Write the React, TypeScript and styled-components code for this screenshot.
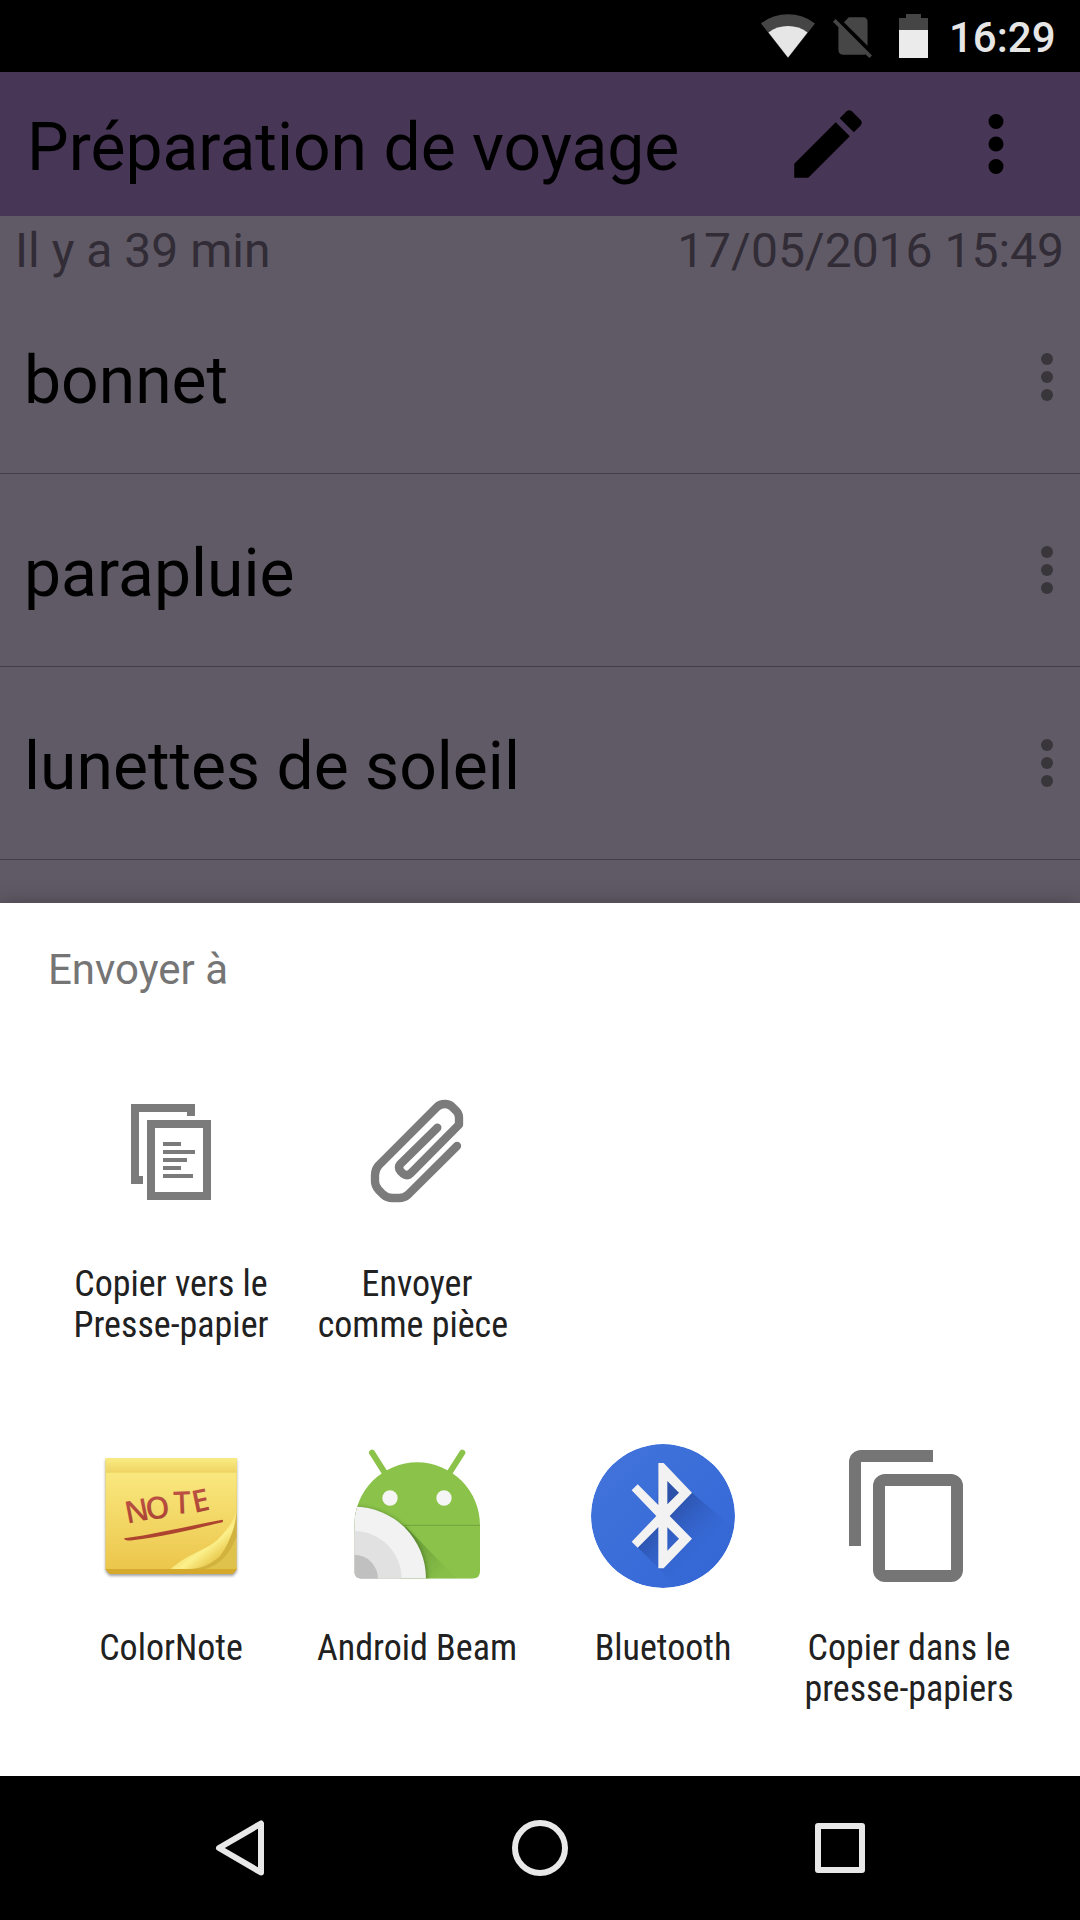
import React from "react";
import styled, { createGlobalStyle } from "styled-components";

const GlobalStyle = createGlobalStyle`
  * { box-sizing: border-box; }
  body { margin: 0; background: #000; font-family: Roboto, "Noto Sans", sans-serif; }
  svg { display: block; flex: none; }
`;

const Screen = styled.div`
  width: 1080px;
  height: 1920px;
  display: flex;
  flex-direction: column;
  overflow: hidden;
  background: #000;
`;

const StatusBar = styled.header`
  height: 72px;
  flex: none;
  display: flex;
  justify-content: flex-end;
  align-items: center;
  padding-right: 25px;
  background: #000;
`;

const StatusIcon = styled.div<{ $gap: number }>`
  margin-right: ${(p) => p.$gap}px;
`;

const Clock = styled.span`
  width: 106px;
  font-size: 42px;
  font-weight: 500;
  line-height: 49px;
  padding-top: 3px;
  text-align: right;
  color: #e6e6e6;
`;

const AppBar = styled.div`
  height: 144px;
  flex: none;
  display: flex;
  align-items: center;
  padding: 0 39px 0 27px;
  background: #483657;
  color: #000;
`;

const AppTitle = styled.h1`
  flex: 1;
  margin: 0;
  padding-top: 7px;
  font-size: 66px;
  font-weight: 400;
  line-height: 78px;
`;

const ActionButton = styled.div<{ $gap?: number }>`
  margin-right: ${(p) => p.$gap ?? 0}px;
`;

const NoteBody = styled.main`
  height: 687px;
  flex: none;
  background: #605a66;
  overflow: hidden;
`;

const Meta = styled.div`
  height: 65px;
  display: flex;
  justify-content: space-between;
  padding: 6px 16px 0 15px;
  font-size: 48px;
  line-height: 57px;
  color: #312c36;
`;

const ItemRow = styled.div`
  height: 193px;
  display: flex;
  align-items: center;
  justify-content: space-between;
  padding: 0 27px 0 24px;
  border-bottom: 1px solid #443e4b;
`;

const ItemText = styled.span`
  padding-top: 8px;
  font-size: 66px;
  line-height: 78px;
  color: #000;
`;

const Sheet = styled.section`
  flex: none;
  height: 873px;
  padding: 42px 48px 0;
  background: #fff;
  box-shadow: 0 0 20px rgba(0, 0, 0, 0.28);
`;

const SheetTitle = styled.h2`
  margin: 0 0 86px;
  font-size: 42px;
  font-weight: 400;
  line-height: 49px;
  color: #757575;
`;

const Targets = styled.div`
  display: grid;
  grid-template-columns: repeat(4, 246px);
  grid-auto-rows: 364px;
`;

const Target = styled.div<{ $column?: number }>`
  grid-column-start: ${(p) => p.$column ?? "auto"};
  display: flex;
  flex-direction: column;
  align-items: center;
`;

const TargetLabel = styled.span`
  margin-top: 40px;
  font-family: "Roboto Condensed", Roboto, sans-serif;
  font-stretch: condensed;
  font-size: 36px;
  line-height: 41px;
  text-align: center;
  white-space: pre-line;
  color: #212121;
`;

const NavBar = styled.nav`
  height: 144px;
  flex: none;
  display: flex;
  align-items: center;
  justify-content: center;
  gap: 240px;
  background: #000;
  position: relative;
`;

const WifiIcon = () => (
  <svg width="54" height="44" viewBox="0 0 54 44">
    <path d="M0 9.5A44 44 0 0 1 54 9.5L27 44Z" fill="#454545" />
    <path d="M7.5 18.5A33 33 0 0 1 46.5 18.5L27 43.5Z" fill="#e6e6e6" />
  </svg>
);

const NoSimIcon = () => (
  <svg width="50" height="50" viewBox="0 0 24 24">
    <path
      fill="#464646"
      d="M18.99 5c0-1.1-.89-2-1.99-2h-7L7.66 5.34 19 16.68 18.99 5zM3.65 3.88L2.38 5.15 5 7.77V19c0 1.1.9 2 2 2h10.01c.35 0 .67-.1.96-.26l1.88 1.88 1.27-1.27L3.65 3.88z"
    />
  </svg>
);

const BatteryIcon = () => (
  <svg width="29" height="44" viewBox="0 0 29 44">
    <path d="M0 4H7V0H22V4H29V16H0Z" fill="#454545" />
    <path d="M0 16H29V44H0Z" fill="#ebebeb" />
  </svg>
);

const EditIcon = () => (
  <svg width="90" height="90" viewBox="0 0 24 24">
    <path d="M3 17.25V21h3.75L17.81 9.94l-3.75-3.75L3 17.25zM20.71 7.04c.39-.39.39-1.02 0-1.41l-2.34-2.34c-.39-.39-1.02-.39-1.41 0l-1.83 1.83 3.75 3.75 1.83-1.83z" />
  </svg>
);

const MoreIcon = () => (
  <svg width="90" height="90" viewBox="0 0 24 24">
    <circle cx="12" cy="6" r="2" />
    <circle cx="12" cy="12" r="2" />
    <circle cx="12" cy="18" r="2" />
  </svg>
);

const RowMenuIcon = () => (
  <svg width="12" height="48" viewBox="0 0 12 48" fill="#39363b">
    <circle cx="6" cy="6" r="6" />
    <circle cx="6" cy="24" r="6" />
    <circle cx="6" cy="42" r="6" />
  </svg>
);

const CopyPagesIcon = () => (
  <svg width="144" height="144" viewBox="99 1080 144 144" fill="#7b7b7b">
    <path d="M131 1104H195V1116H187V1112H139V1176H143V1184H131Z" />
    <path fillRule="evenodd" d="M147 1120H211V1200H147ZM155 1128V1192H203V1128Z" />
    <path d="M163 1142h18v4h-18zM163 1150h32v4h-32zM163 1158h24v4h-24zM163 1166h18v4h-18zM163 1174h30v4h-30z" />
  </svg>
);

const PaperclipIcon = () => (
  <svg width="144" height="144" viewBox="0 0 432 432" fill="none" stroke="#7b7b7b" strokeWidth="25" strokeLinecap="round" strokeLinejoin="round">
    <path d="M336 198L190 343Q178 354 162 354H142Q126 354 114 343L101 330Q90 318 90 304V285Q90 268 101 256L276 81Q285 72 300 72Q313 72 322 81L334 93Q342 101 342 113V134L200 277Q187 291 174 281L167 274Q157 262 167 251L277 143" />
  </svg>
);

const ColorNoteIcon = () => (
  <svg width="144" height="144" viewBox="57 42 432 432">
    <defs>
      <linearGradient id="paper" x1="0" y1="0" x2="0" y2="1">
        <stop offset="0" stopColor="#fbed86" />
        <stop offset="1" stopColor="#ecc64c" />
      </linearGradient>
      <linearGradient id="band" x1="0" y1="0" x2="0" y2="1">
        <stop offset="0" stopColor="#f9ec83" />
        <stop offset="1" stopColor="#efd364" />
      </linearGradient>
      <linearGradient id="curl" x1="0.25" y1="0.45" x2="0.7" y2="0.95">
        <stop offset="0" stopColor="#efcf55" />
        <stop offset="0.5" stopColor="#fcf08b" />
        <stop offset="1" stopColor="#e3bd3b" />
      </linearGradient>
      <linearGradient id="ink" x1="0" y1="0" x2="0" y2="1">
        <stop offset="0" stopColor="#c4574b" />
        <stop offset="1" stopColor="#a5402f" />
      </linearGradient>
      <filter id="noteShadow" x="-10%" y="-10%" width="120%" height="130%">
        <feGaussianBlur stdDeviation="4" />
      </filter>
    </defs>
    <path d="M77 90H470V424L460 437H88L77 424Z" fill="#000" opacity=".4" filter="url(#noteShadow)" />
    <path d="M77 410H470V419L458 432H89L77 419Z" fill="#d5a92b" />
    <path d="M77 85H470V417H77Z" fill="#dfc24c" />
    <path d="M77 85H470V245C455 300 447 350 420 377C395 397 370 415 320 417H77Z" fill="url(#paper)" />
    <path d="M77 85H470V128H77Z" fill="url(#band)" />
    <path d="M470 245C465 300 443 345 420 377C390 404 360 416 325 417H272C325 370 380 360 412 330C440 302 457 278 470 245Z" fill="url(#curl)" />
    <path d="M470 250C465 302 443 347 421 378C393 404 366 415 335 417H376C420 405 450 370 470 320Z" fill="#bd9c2e" opacity=".4" />
    <text
      x="0 61 143 204"
      y="0 -2 -10 -4"
      rotate="-3 0 6 -4"
      transform="translate(141 281) rotate(-8)"
      fontFamily="'Open Sans', sans-serif"
      fontWeight="600"
      fontSize="92"
      fill="url(#ink)"
    >
      NOTE
    </text>
    <path d="M133 325C230 312 330 287 427 269C430 270 430 275 427 277C330 300 240 322 158 331C145 333 130 331 133 325Z" fill="#ad442f" />
  </svg>
);

const BeamIcon = () => (
  <svg width="144" height="144" viewBox="45 42 432 432">
    <defs>
      <clipPath id="robot">
        <path d="M73 286A188.500 189 0 0 1 450 286V424Q450 446 428 446H95Q73 446 73 424Z" />
      </clipPath>
      <linearGradient id="beamShade" gradientUnits="userSpaceOnUse" x1="240" y1="330" x2="340" y2="430">
        <stop offset="0" stopColor="#2e5a1c" stopOpacity=".35" />
        <stop offset="1" stopColor="#2e5a1c" stopOpacity=".04" />
      </linearGradient>
      <filter id="discShadow" x="-20%" y="-20%" width="140%" height="140%">
        <feGaussianBlur stdDeviation="6" />
      </filter>
    </defs>
    <path d="M126 68L166 131M397 68L357 131" stroke="#8bc34a" strokeWidth="18" strokeLinecap="round" />
    <g clipPath="url(#robot)">
      <rect x="73" y="90" width="378" height="357" fill="#8bc34a" />
      <path d="M73 286H450" stroke="#6b9c38" strokeWidth="2.500" />
      <path d="M225 287L380 446H250Z" fill="url(#beamShade)" />
      <circle cx="74" cy="449" r="217" fill="#254716" opacity=".5" filter="url(#discShadow)" />
      <circle cx="72" cy="446" r="216" fill="#f2f2f2" />
      <circle cx="72" cy="446" r="143" fill="#e1e1e1" />
      <circle cx="72" cy="446" r="72" fill="#c0c0c0" />
      <circle cx="180" cy="204" r="23" fill="#f5f5f5" />
      <circle cx="342" cy="204" r="23" fill="#f5f5f5" />
    </g>
  </svg>
);

const BluetoothIcon = () => (
  <svg width="144" height="144" viewBox="63 42 432 432">
    <defs>
      <clipPath id="btDisc">
        <circle cx="279" cy="258" r="216" />
      </clipPath>
      <linearGradient id="btShade" gradientUnits="userSpaceOnUse" x1="270" y1="250" x2="385" y2="365">
        <stop offset="0" stopColor="#1c3478" stopOpacity=".5" />
        <stop offset="1" stopColor="#2750b8" stopOpacity=".05" />
      </linearGradient>
      <linearGradient id="btFace" x1="0" y1="0" x2="1" y2="1">
        <stop offset="0" stopColor="#4374db" />
        <stop offset="1" stopColor="#3367d6" />
      </linearGradient>
    </defs>
    <g clipPath="url(#btDisc)">
      <circle cx="279" cy="258" r="216" fill="url(#btFace)" />
      <path d="M281 100L366 188L520 320V480H330L203 352L186 335L262 258L265 100Z" fill="url(#btShade)" />
    </g>
    <path
      fill="#f2f2f2"
      fillRule="evenodd"
      d="M265 99H281L366 188L299 258L366 326L281 415H265V291L203 353L185 335L259 258L185 181L203 163L265 225ZM292 153V223L327 188ZM292 292V362L327 326Z"
    />
  </svg>
);

const CopyIcon = () => (
  <svg width="144" height="144" viewBox="51 42 432 432" fill="#757575">
    <path d="M339 60H123A36 36 0 0 0 87 96V348H123V96H339Z" />
    <path
      fillRule="evenodd"
      d="M195 132H393A36 36 0 0 1 429 168V420A36 36 0 0 1 393 456H195A36 36 0 0 1 159 420V168A36 36 0 0 1 195 132ZM195 168V420H393V168Z"
    />
  </svg>
);

const NavIcons = () => (
  <>
    <svg width="60" height="60" viewBox="0 0 60 60" fill="none" stroke="#e8e8e8" strokeWidth="6" strokeLinejoin="round">
      <path d="M51 5.500V54.500L9 30Z" />
    </svg>
    <svg width="60" height="60" viewBox="0 0 60 60" fill="none" stroke="#e8e8e8" strokeWidth="6">
      <circle cx="30" cy="30" r="25" />
    </svg>
    <svg width="60" height="60" viewBox="0 0 60 60" fill="none" stroke="#e8e8e8" strokeWidth="6" strokeLinejoin="round">
      <rect x="8" y="8" width="44" height="44" />
    </svg>
  </>
);

const items = ["bonnet", "parapluie", "lunettes de soleil"];

const targets: { label: string; icon: React.ReactNode; column?: number }[] = [
  { label: "Copier vers le\nPresse-papier", icon: <CopyPagesIcon /> },
  { label: "Envoyer\ncomme pièce\u00a0", icon: <PaperclipIcon /> },
  { label: "ColorNote", icon: <ColorNoteIcon />, column: 1 },
  { label: "Android Beam", icon: <BeamIcon /> },
  { label: "Bluetooth", icon: <BluetoothIcon /> },
  { label: "Copier dans le\npresse-papiers", icon: <CopyIcon /> },
];

export default function App() {
  return (
    <>
      <GlobalStyle />
      <Screen>
        <StatusBar>
          <StatusIcon $gap={13}>
            <WifiIcon />
          </StatusIcon>
          <StatusIcon $gap={21}>
            <NoSimIcon />
          </StatusIcon>
          <StatusIcon $gap={21}>
            <BatteryIcon />
          </StatusIcon>
          <Clock>16:29</Clock>
        </StatusBar>
        <AppBar>
          <AppTitle>Préparation de voyage</AppTitle>
          <ActionButton $gap={78}>
            <EditIcon />
          </ActionButton>
          <ActionButton>
            <MoreIcon />
          </ActionButton>
        </AppBar>
        <NoteBody>
          <Meta>
            <span>Il y a 39 min</span>
            <span>17/05/2016 15:49</span>
          </Meta>
          {items.map((item) => (
            <ItemRow key={item}>
              <ItemText>{item}</ItemText>
              <RowMenuIcon />
            </ItemRow>
          ))}
        </NoteBody>
        <Sheet>
          <SheetTitle>Envoyer à</SheetTitle>
          <Targets>
            {targets.map((t) => (
              <Target key={t.label} $column={t.column}>
                {t.icon}
                <TargetLabel>{t.label}</TargetLabel>
              </Target>
            ))}
          </Targets>
        </Sheet>
        <NavBar>
          <NavIcons />
        </NavBar>
      </Screen>
    </>
  );
}
